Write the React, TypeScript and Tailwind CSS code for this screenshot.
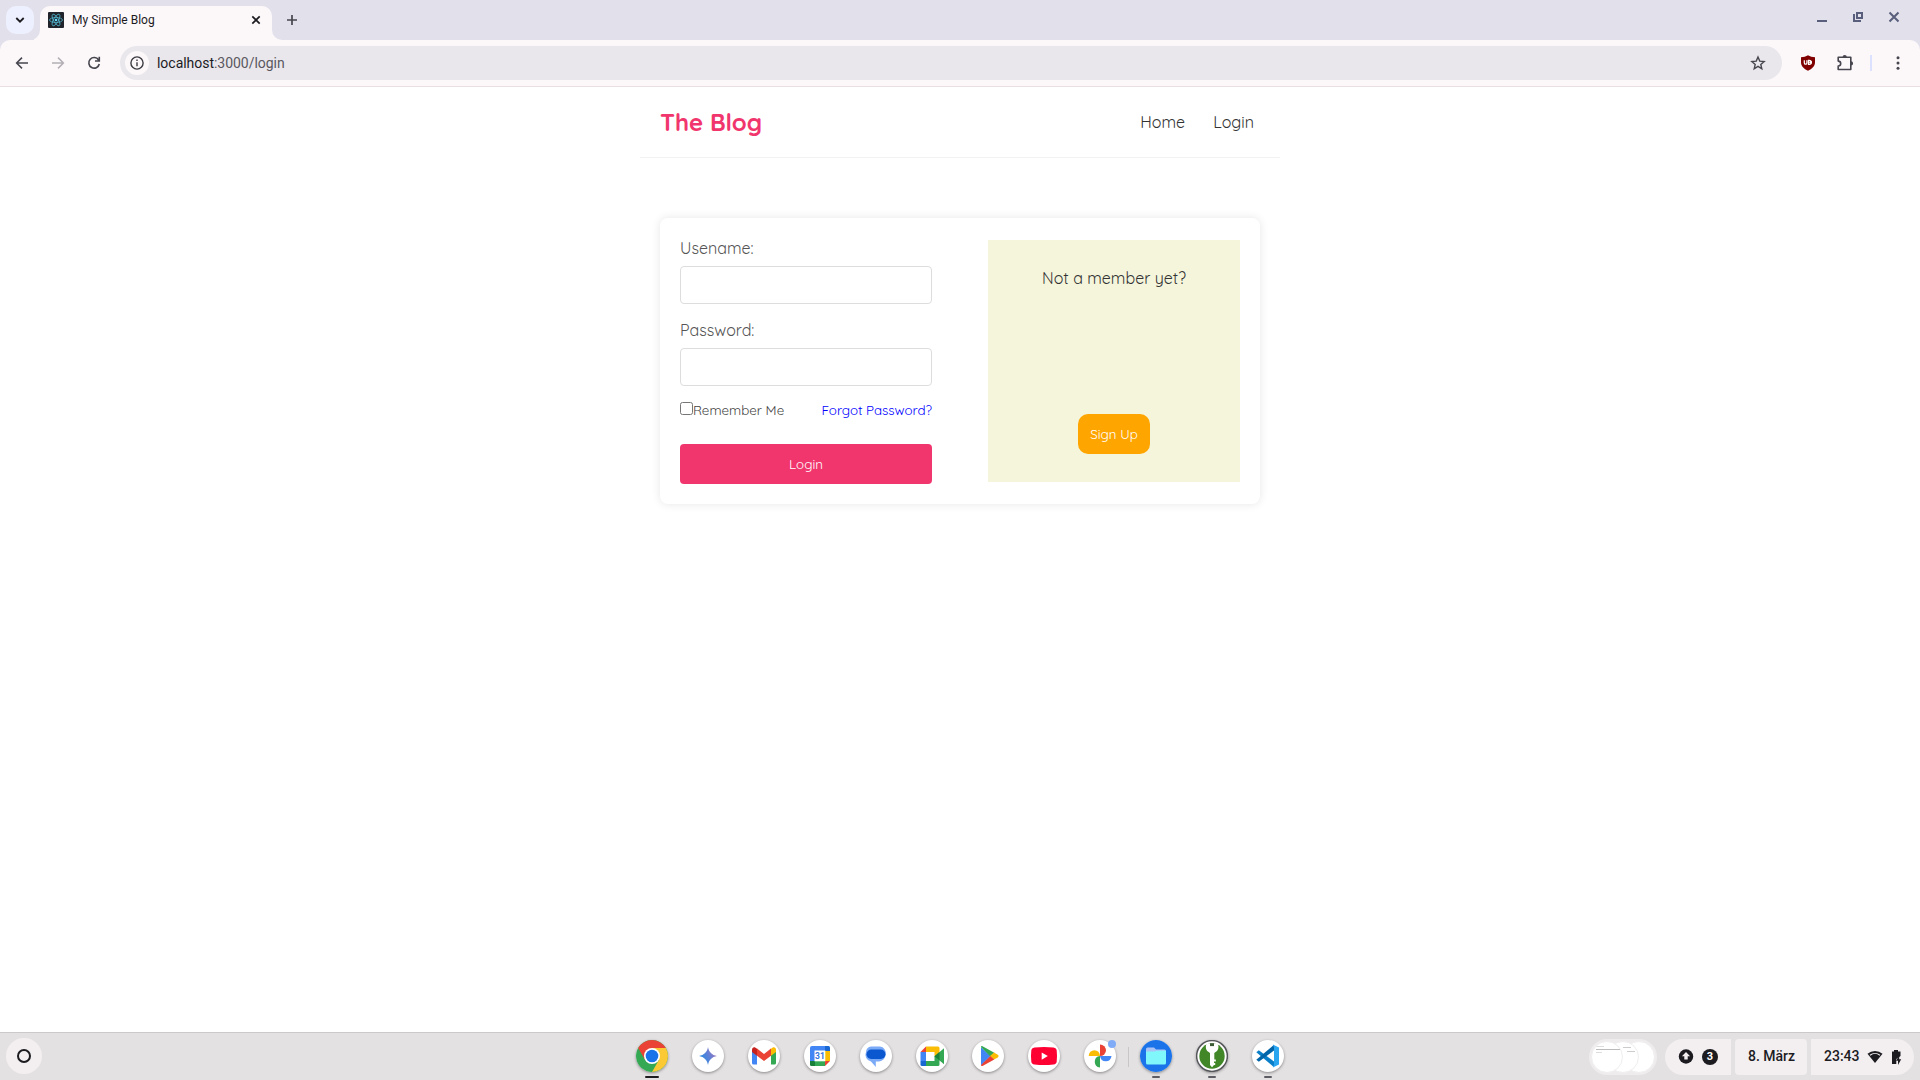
import React from "react";

type IconProps = { children: React.ReactNode; size?: number; box?: string; className?: string };

function Svg({ children, size = 16, box = "0 0 16 16", className = "" }: IconProps) {
  return (
    <svg width={size} height={size} viewBox={box} fill="none" className={"block shrink-0 " + className}>
      {children}
    </svg>
  );
}

function ReactLogo() {
  return (
    <Svg>
      <rect width="16" height="16" rx="1" fill="#20232a" />
      <g stroke="#4fb3cc" strokeWidth="0.8">
        <ellipse cx="8" cy="8" rx="6.5" ry="2.5" />
        <ellipse cx="8" cy="8" rx="6.5" ry="2.5" transform="rotate(60 8 8)" />
        <ellipse cx="8" cy="8" rx="6.5" ry="2.5" transform="rotate(120 8 8)" />
      </g>
      <circle cx="8" cy="8" r="1.3" fill="#61dafb" />
    </Svg>
  );
}

function TabStrip() {
  return (
    <div className="flex h-10 items-start bg-[#e2e0eb]">
      <div className="ml-[6px] mt-[6px] flex h-7 w-7 items-center justify-center rounded-[10px] bg-[#edf0ff]">
        <Svg size={10} box="0 0 10 10">
          <path d="M1.3 3l3.7 3.7L8.7 3" stroke="#1c1b1f" strokeWidth="1.8" />
        </Svg>
      </div>
      <div className="flex h-10 items-end">
        <svg width="6" height="10" viewBox="4 0 6 10" className="block">
          <path d="M10 0v10H0A10 10 0 0 0 10 0z" fill="#fcf8fa" />
        </svg>
        <div className="flex h-[34px] w-[232px] items-center rounded-t-[10px] bg-[#fcf8fa] pb-[6px] pl-2 pr-[10px]">
          <ReactLogo />
          <span className="ml-2 whitespace-nowrap text-[12px] leading-4 text-[#1c1b1f]">My Simple Blog</span>
          <Svg size={12} box="0 0 12 12" className="ml-auto">
            <path d="M2.3 2.3l7.4 7.4M9.7 2.3L2.3 9.7" stroke="#1c1b1f" strokeWidth="1.7" />
          </Svg>
        </div>
        <svg width="10" height="10" viewBox="0 0 10 10" className="block">
          <path d="M0 0v10h10A10 10 0 0 1 0 0z" fill="#fcf8fa" />
        </svg>
      </div>
      <Svg size={12} box="0 0 12 12" className="ml-1 mt-[14px]">
        <path d="M6 1v10M1 6h10" stroke="#47464f" strokeWidth="1.7" />
      </Svg>
      <div className="ml-auto mr-[20px] flex items-center pt-[11px]">
        <Svg size={12} box="0 0 12 12">
          <path d="M1 10h10" stroke="#585e7b" strokeWidth="2" />
        </Svg>
        <Svg size={12} box="0 0 12 12" className="ml-6">
          <path d="M5 2h5v5H5zM2 3v7h7" stroke="#585e7b" strokeWidth="2" />
        </Svg>
        <Svg size={12} box="0 0 12 12" className="ml-6">
          <path d="M1.5 1.5l9 9M10.5 1.5l-9 9" stroke="#585e7b" strokeWidth="2" />
        </Svg>
      </div>
    </div>
  );
}

function Toolbar() {
  return (
    <div className="bg-[#e2e0eb]">
      <div className="flex h-[47px] items-center rounded-t-[10px] border-b border-[#e8dfe2] bg-[#fcf8fa]">
        <Svg size={16} className="ml-[14px]">
          <path d="M14 8H3M8 2.6L2.6 8 8 13.4" stroke="#47464f" strokeWidth="1.5" />
        </Svg>
        <Svg size={16} className="ml-5">
          <path d="M2 8h11M8 2.6L13.4 8 8 13.4" stroke="#b3b0b5" strokeWidth="1.5" />
        </Svg>
        <Svg size={16} className="ml-5">
          <path d="M12.6 5A5.3 5.3 0 1 0 13.3 9M13.3 1.8V6H9" stroke="#47464f" strokeWidth="1.6" />
        </Svg>
        <div className="ml-[18px] flex h-[34px] w-[1662px] items-center rounded-full bg-[#e9e7ec] pl-[5px]">
          <div className="flex h-6 w-6 items-center justify-center rounded-full bg-[#fcf8fa]">
            <Svg>
              <circle cx="8" cy="8" r="6.1" stroke="#3c3b41" strokeWidth="1.4" />
              <path d="M8 7.2v4M8 4.5v1.5" stroke="#3c3b41" strokeWidth="1.4" />
            </Svg>
          </div>
          <span className="ml-2 text-[14px] leading-5 -tracking-[0.03px] text-[#1c1b1f]">
            localhost<span className="text-[#5a585e]">:3000/login</span>
          </span>
          <Svg className="ml-auto mr-4">
            <path d="M8 2l1.75 4.1 4.4.4-3.35 2.9 1 4.35L8 11.4l-3.8 2.35 1-4.35L1.85 6.5l4.4-.4z" stroke="#47464f" strokeWidth="1.4" />
          </Svg>
        </div>
        <div className="ml-[18px] flex items-center">
          <Svg>
            <path d="M8 .3c2 1.3 4.400 1.900 7 2v5c0 4-3 6.700-7 8.400-4-1.700-7-4.400-7-8.400v-5c2.600-.1 5-.7 7-2z" fill="#800000" />
            <path d="M4.300 5.300v2.600a1.300 1.300 0 0 0 2.600 0V5.300M8.500 5.300v4h.9a2 2 0 0 0 0-4z" stroke="#fff" strokeWidth="1.200" />
            <circle cx="10.600" cy="7.300" r="1.300" fill="#fff" />
          </Svg>
          <Svg size={18} box="0 0 18 18" className="ml-5">
            <path d="M2.200 3.300H14.800V15.500H2.200v-3.400a2.500 2.500 0 0 0 0-5z" stroke="#47464f" strokeWidth="1.600" strokeLinejoin="round" />
            <path d="M6.600 3a2.100 2.100 0 0 1 4.200 0zM15 7.300a2.100 2.100 0 0 1 0 4.200z" fill="#47464f" />
          </Svg>
          <div className="ml-4 h-4 w-[2px] bg-[#dbe1ff]" />
          <Svg className="ml-[18px]">
            <g fill="#47464f">
              <circle cx="8" cy="2.700" r="1.500" />
              <circle cx="8" cy="8" r="1.500" />
              <circle cx="8" cy="13.300" r="1.500" />
            </g>
          </Svg>
        </div>
      </div>
    </div>
  );
}

function Field({ label, className, type }: { label: string; className: string; type: string }) {
  return (
    <label className={"block " + className}>
      <span className="block h-5 whitespace-nowrap text-[16px] leading-5 text-[#555]">{label}</span>
      <input type={type} className="mt-2 block h-[38px] w-full rounded-[4px] border border-[#ddd] bg-white px-2 outline-none" />
    </label>
  );
}

function BlogPage() {
  return (
    <main className="flex-1 bg-white font-['Quicksand','Lato',sans-serif] font-normal text-[#333]">
      <div className="mx-auto w-[640px]">
        <nav className="flex h-[71px] items-center border-b border-[#f2f2f2] px-5">
          <h1 className="text-[24px] font-bold leading-8 text-[#f1356d]">The Blog</h1>
          <a className="ml-auto pb-px text-[16px] leading-6">Home</a>
          <a className="ml-7 mr-[6px] pb-px text-[16px] leading-6">Login</a>
        </nav>
        <section className="mx-auto mt-[60px] flex h-[286px] w-[600px] justify-between rounded-lg bg-white px-5 shadow-[0_0_10px_rgba(0,0,0,0.1)]">
          <form className="w-[252px] pt-5">
            <Field label="Usename:" type="text" className="" />
            <Field label="Password:" type="password" className="mt-4" />
            <div className="mt-[15px] flex h-[14px] items-center text-[13.333px] leading-4">
              <input type="checkbox" className="h-[13px] w-[13px]" />
              <span className="mt-[3px] whitespace-nowrap text-[#444]">Remember Me</span>
              <a className="ml-auto mt-[3px] whitespace-nowrap text-[#0000ff]">Forgot Password?</a>
            </div>
            <button type="button" className="mt-[29px] flex h-10 w-full items-center justify-center rounded-[4px] bg-[#f1356d] pt-[2px] text-[13.333px] text-white">
              Login
            </button>
          </form>
          <aside className="mt-[22px] flex h-[242px] w-[252px] flex-col items-center justify-between bg-[#f5f5dc] py-7">
            <p className="whitespace-nowrap text-[16px] leading-5">Not a member yet?</p>
            <button type="button" className="flex h-10 w-[72px] items-center justify-center rounded-[10px] bg-[#ffa500] pt-[2px] text-[13.333px] text-white">
              Sign Up
            </button>
          </aside>
        </section>
      </div>
    </main>
  );
}

const apps: { name: string; mark?: string; art: React.ReactNode }[] = [
  {
    name: "Chrome",
    mark: "w-[14px] bg-[#1c1b1f]",
    art: (
      <>
        <circle cx="16" cy="16" r="16" fill="#34a853" />
        <path d="M2.150 8A16 16 0 0 1 29.850 8H16L9.100 20z" fill="#ea4335" />
        <path d="M29.850 8A16 16 0 0 1 16 32l6.900-12L16 8z" fill="#fbc934" />
        <circle cx="16" cy="16" r="8" fill="#fff" />
        <circle cx="16" cy="16" r="6.300" fill="#1a73e8" />
      </>
    ),
  },
  {
    name: "Gemini",
    art: (
      <>
        <defs>
          <linearGradient id="gem" x1="7" y1="20" x2="25" y2="11" gradientUnits="userSpaceOnUse">
            <stop stopColor="#1c8de0" />
            <stop offset=".5" stopColor="#5b80d8" />
            <stop offset="1" stopColor="#b07bb8" />
          </linearGradient>
        </defs>
        <path d="M16 7c.8 5 4 8.200 9 9-5 .8-8.200 4-9 9-.8-5-4-8.200-9-9 5-.8 8.200-4 9-9z" fill="url(#gem)" />
      </>
    ),
  },
  {
    name: "Gmail",
    art: (
      <>
        <path d="M4 11l5 3v10.500H5.500A1.500 1.500 0 0 1 4 23z" fill="#4285f4" />
        <path d="M28 11l-5 3v10.500h3.500A1.500 1.500 0 0 0 28 23z" fill="#34a853" />
        <path d="M22.500 9l2-1.300c1.700-1 3.500.1 3.500 2V12l-5 3.800z" fill="#fbbc04" />
        <path d="M9.500 9l-2-1.300c-1.700-1-3.500.1-3.500 2V12l5 3.800z" fill="#c5221f" />
        <path d="M9 8.600l7 5.300 7-5.300v7.200l-7 5.200-7-5.200z" fill="#ea4335" />
      </>
    ),
  },
  {
    name: "Calendar",
    art: (
      <>
        <path d="M6 8a2 2 0 0 1 2-2h14v5H11v10H6z" fill="#4285f4" />
        <path d="M21 6h3.500A1.500 1.500 0 0 1 26 7.500V11h-5z" fill="#1967d2" />
        <path d="M21 11h5v10h-5z" fill="#fbbc04" />
        <path d="M11 21h10v5H11z" fill="#34a853" />
        <path d="M6 21h5v5H7.500A1.500 1.500 0 0 1 6 24.500z" fill="#188038" />
        <path d="M21 21h5l-5 5z" fill="#ea4335" />
        <path d="M10.500 10.500h10.800v10.800H10.500z" fill="#fff" />
        <text x="16" y="19.300" textAnchor="middle" fontSize="8.500" fontWeight="700" fill="#3474e0" fontFamily="Roboto">31</text>
      </>
    ),
  },
  {
    name: "Messages",
    art: (
      <>
        <path d="M11 6.500h9a6.500 6.500 0 0 1 5.600 8A7 7 0 0 1 19 21.500h-3.200V27L11 21.500A7 7 0 0 1 6 12a5.500 5.500 0 0 1 5-5.500z" fill="#7baaf7" />
        <rect x="6.500" y="9.500" width="19" height="9.500" rx="4.700" fill="#0b57d0" />
      </>
    ),
  },
  {
    name: "Meet",
    art: (
      <>
        <path d="M10 6.500V12H4.500z" fill="#ea4335" />
        <path d="M4.500 12H10v9H4.500z" fill="#4285f4" />
        <path d="M4.500 21H10v5H6a1.500 1.500 0 0 1-1.500-1.500z" fill="#1967d2" />
        <path d="M10 6.500h12A1.500 1.500 0 0 1 23.500 8v8h-5v-4H10z" fill="#fbbc04" />
        <path d="M10 21h8.500v-5h5v8.500A1.500 1.500 0 0 1 22 26H10z" fill="#34a853" />
        <path d="M18.500 16.200l9.500-8v16z" fill="#34a853" />
        <path d="M18.500 16.200l5-4.200v8.400z" fill="#188038" />
      </>
    ),
  },
  {
    name: "Play",
    art: (
      <>
        <path d="M9 7v18.500l9.500-9.400z" fill="#4285f4" />
        <path d="M9 7c0-1 .9-1.100 1.500-.8l11.800 6.600-4 3.800z" fill="#34a853" />
        <path d="M22 12.600l3.800 2.200c1 .6 1 2 0 2.600L22 19.600l-4-3.500z" fill="#fbbc04" />
        <path d="M9 25c0 1 .9 1.300 1.500 1l11.800-6.600-4-3.500z" fill="#ea4335" />
      </>
    ),
  },
  {
    name: "YouTube",
    art: (
      <>
        <path d="M6.500 7.500q9.500-1 19 0Q28.500 8 28.700 10.500q.6 5.500 0 11-.2 2.500-3.200 3-9.500 1-19 0-3-.5-3.200-3-.6-5.500 0-11Q3.500 8 6.500 7.500z" fill="#ff0033" />
        <path d="M13.700 12.500v7.200L19.800 16z" fill="#fff" />
      </>
    ),
  },
  {
    name: "Photos",
    art: (
      <>
        <path d="M16 4.500a6 5.800 0 0 1 0 11.600z" fill="#ea4335" />
        <path d="M27.500 16a5.800 6 0 0 1-11.500 0z" fill="#4285f4" />
        <path d="M16 27.500a6 5.800 0 0 1 0-11.500z" fill="#34a853" />
        <path d="M4.700 16a5.600 5.800 0 0 1 11.300 0z" fill="#fbbc04" />
      </>
    ),
  },
  {
    name: "Files",
    mark: "w-2 bg-[#5d5b63]",
    art: (
      <>
        <circle cx="16" cy="16" r="16" fill="#1a73e8" />
        <path d="M6 9A1.500 1.500 0 0 1 7.500 7.500H14l2 2h8.500A1.500 1.500 0 0 1 26 11v3H6z" fill="#a9c3f7" />
        <path d="M6 11.500h8.800l1.500-.8H26V23a1.500 1.500 0 0 1-1.500 1.500h-17A1.500 1.500 0 0 1 6 23z" fill="#80f7fa" />
      </>
    ),
  },
  {
    name: "KeePass",
    mark: "w-2 bg-[#5d5b63]",
    art: (
      <>
        <circle cx="16" cy="16" r="15.400" fill="#fff" stroke="#55565a" strokeWidth="1.500" />
        <circle cx="16" cy="16" r="12.700" fill="#418727" />
        <path d="M11 3.500C9 6 9.800 10 12 11.600l2 1.400v12l2 2.300 2-2.300h1.200v-1.900h-1.200v-1.600h1.800v-2h-1.500V13l2-1.400c2.200-1.600 3-5.600 1-8.100z" fill="#fff" />
        <path d="M14 3.200h4v2.900h-4z" fill="#3b5a34" />
      </>
    ),
  },
  {
    name: "Code",
    mark: "w-2 bg-[#5d5b63]",
    art: (
      <>
        <path d="M4.300 12.300l2.500-2L22 21.500v5.700z" fill="#0a7fc9" />
        <path d="M22 4.800v5.700L6.800 21.700l-2.500-2z" fill="#0065a9" />
        <path d="M20.800 4.600l6.200 2.800v17.200l-6.200 2.800 1.200-3V7.600z" fill="#2aa5f0" />
      </>
    ),
  },
];

function Shelf() {
  return (
    <footer className="grid h-12 grid-cols-[1fr_auto_1fr] items-center border-t border-[#cbc9ca] bg-[#e4e1e3] font-['Roboto',sans-serif]">
      <div className="mb-px ml-[6px] flex h-9 w-9 items-center justify-center rounded-full bg-[#f3eff1]">
        <div className="h-[14px] w-[14px] rounded-full border-2 border-[#1c1b1f]" />
      </div>
      <div className="flex items-center gap-6">
        {apps.map((a) => (
          <React.Fragment key={a.name}>
            {a.name === "Files" && <div className="-mx-[12.5px] h-5 w-px bg-[#c9c6c8]" />}
            <div className="relative flex h-[47px] w-8 flex-col items-center pt-[6.5px]">
              <div className="rounded-full bg-white shadow-[0_1px_3px_rgba(0,0,0,0.4)]">
                <svg width="32" height="32" viewBox="0 0 32 32" className="block">
                  {a.art}
                </svg>
              </div>
              {a.name === "Photos" && <div className="absolute right-0 top-[7px] h-2 w-2 rounded-full bg-[#80acf7]" />}
              {a.mark && <div className={"mt-[4.5px] h-[2px] shrink-0 rounded-full " + a.mark} />}
            </div>
          </React.Fragment>
        ))}
      </div>
      <div className="mr-[6px] flex items-center justify-end text-[#1c1b1f]">
        <div className="mr-2 flex h-9 w-[68px] items-center rounded-full bg-[#efecee] px-[2px]">
          <div className="z-20 h-8 w-8 shrink-0 overflow-hidden rounded-full border border-[#f0eef0] bg-white pl-1 pt-1">
            <div className="h-px w-2 bg-[#ddd]" />
            <div className="mt-[2px] h-px w-6 bg-[#bbb]" />
            <div className="mt-[2px] h-px w-[6px] bg-[#ddd]" />
          </div>
          <div className="z-10 -ml-4 h-8 w-8 shrink-0 rounded-full border border-[#f0eef0] bg-white pl-[15px] pt-[5px]">
            <div className="h-px w-2 bg-[#ccc]" />
            <div className="ml-1 mt-[3px] h-px w-2 bg-[#ccc]" />
          </div>
          <div className="-ml-4 h-8 w-8 shrink-0 rounded-full border border-[#f0eef0] bg-white" />
        </div>
        <div className="flex h-9 w-[66px] items-center rounded-l-full rounded-r-[4px] bg-[#f3eff1] pl-[13px]">
          <Svg>
            <circle cx="8" cy="7.500" r="7.200" fill="#1c1b1f" />
            <path d="M8 3L3.900 7.200h2.400v3.400h3.400V7.200h2.400z" fill="#f3eff1" />
          </Svg>
          <div className="ml-2 flex h-4 w-4 items-center justify-center rounded-full bg-[#1c1b1f] text-[11px] font-bold leading-none text-white">3</div>
        </div>
        <div className="ml-1 flex h-9 w-[72px] items-center justify-center rounded-[4px] bg-[#f3eff1] pl-px text-[14px] font-medium">8. März</div>
        <div className="ml-1 flex h-9 w-[103px] items-center rounded-l-[4px] rounded-r-full bg-[#f3eff1] pl-[13px]">
          <span className="text-[14px] font-medium">23:43</span>
          <Svg className="ml-[7px]">
            <path d="M8 14L.5 4.800a11.800 11.800 0 0 1 15 0z" fill="#1c1b1f" />
            <path d="M3 6.300a8 8 0 0 1 10 0" stroke="#f3eff1" strokeWidth="1.100" />
          </Svg>
          <Svg className="ml-[6px]">
            <path d="M5 1h4v1.500h2.500V7L7.300 10v5H3V2.500h2z" fill="#1c1b1f" />
            <path d="M10.200 6.500v3.700h2L9 16v-4.200H7z" fill="#1c1b1f" />
          </Svg>
        </div>
      </div>
    </footer>
  );
}

export default function App() {
  return (
    <div className="flex h-screen w-full flex-col overflow-hidden font-['Roboto',sans-serif]">
      <TabStrip />
      <Toolbar />
      <BlogPage />
      <Shelf />
    </div>
  );
}
